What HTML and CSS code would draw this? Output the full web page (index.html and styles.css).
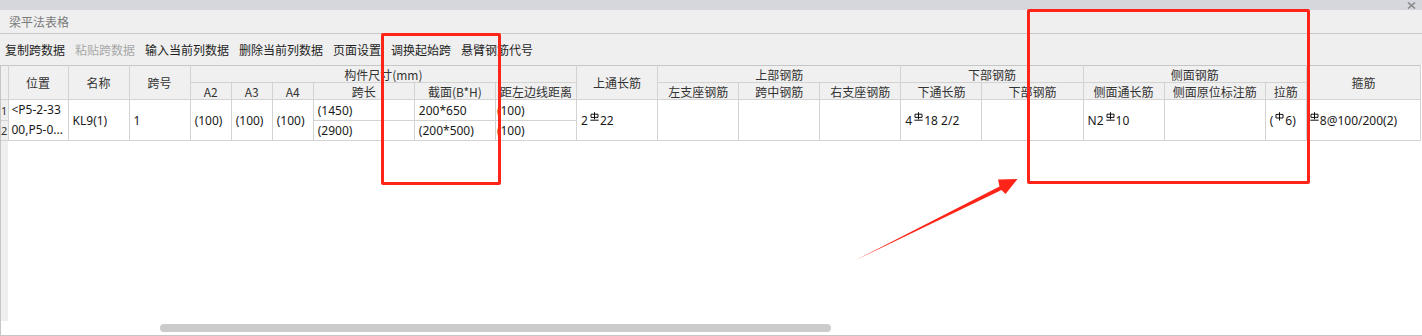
FILE: index.html
```html
<!DOCTYPE html>
<html lang="zh">
<head>
<meta charset="utf-8">
<title>梁平法表格</title>
<link rel="stylesheet" href="styles.css">
</head>
<body>
<svg width="0" height="0" class="defs">
  <defs>
    <symbol id="hrb" viewBox="0 0 9 9">
      <path d="M4.5 0.2V7.4M1 2.2H8V5.4H1Z M0.3 8.2H8.7" fill="none" stroke="currentColor" stroke-width="1"/>
    </symbol>
    <symbol id="hpb" viewBox="0 0 9 9">
      <path d="M4.5 0.2V8.6M1 2.4H8V6H1Z" fill="none" stroke="currentColor" stroke-width="1"/>
    </symbol>
  </defs>
</svg>
<div class="app">
  <div class="topbar">
    <svg class="close" width="9" height="7" viewBox="0 0 9 7"><path d="M1 0.5L8 6.5M8 0.5L1 6.5" stroke="#8a8a8a" stroke-width="1.6"/></svg>
  </div>
  <div class="titlebar">梁平法表格</div>
  <div class="toolbar">
    <span class="tool">复制跨数据</span>
    <span class="tool disabled">粘贴跨数据</span>
    <span class="tool">输入当前列数据</span>
    <span class="tool">删除当前列数据</span>
    <span class="tool">页面设置</span>
    <span class="tool">调换起始跨</span>
    <span class="tool">悬臂钢筋代号</span>
  </div>
  <div class="grid">
    <table class="sheet">
      <colgroup>
        <col class="c-rh"><col class="c60"><col class="c61"><col class="c61">
        <col class="c41"><col class="c41"><col class="c41"><col class="c101"><col class="c81"><col class="c81">
        <col class="c81"><col class="c81"><col class="c81"><col class="c81">
        <col class="c81"><col class="c101"><col class="c81"><col class="c101"><col class="c41"><col class="c115">
      </colgroup>
      <thead>
        <tr class="h1">
          <th class="rh" rowspan="2"></th>
          <th rowspan="2">位置</th>
          <th rowspan="2">名称</th>
          <th rowspan="2">跨号</th>
          <th colspan="6">构件尺寸(mm)</th>
          <th rowspan="2">上通长筋</th>
          <th colspan="3">上部钢筋</th>
          <th colspan="2">下部钢筋</th>
          <th colspan="3">侧面钢筋</th>
          <th rowspan="2">箍筋</th>
        </tr>
        <tr class="h2">
          <th>A2</th><th>A3</th><th>A4</th><th>跨长</th><th>截面(B*H)</th><th class="tight">距左边线距离</th>
          <th>左支座钢筋</th><th>跨中钢筋</th><th>右支座钢筋</th>
          <th>下通长筋</th><th>下部钢筋</th>
          <th>侧面通长筋</th><th>侧面原位标注筋</th><th>拉筋</th>
        </tr>
      </thead>
      <tbody>
        <tr class="r1">
          <td class="rh">1</td>
          <td rowspan="2" class="pos">&lt;P5-2-33<br>00,P5-0...</td>
          <td rowspan="2">KL9(1)</td>
          <td rowspan="2">1</td>
          <td rowspan="2">(100)</td>
          <td rowspan="2">(100)</td>
          <td rowspan="2">(100)</td>
          <td>(1450)</td>
          <td>200*650</td>
          <td class="tight">(100)</td>
          <td rowspan="2">2<svg class="bar"><use href="#hrb"/></svg>22</td>
          <td rowspan="2"></td>
          <td rowspan="2"></td>
          <td rowspan="2"></td>
          <td rowspan="2">4<svg class="bar"><use href="#hrb"/></svg>18 2/2</td>
          <td rowspan="2"></td>
          <td rowspan="2">N2<svg class="bar"><use href="#hrb"/></svg>10</td>
          <td rowspan="2"></td>
          <td rowspan="2">(<svg class="bar"><use href="#hpb"/></svg>6)</td>
          <td rowspan="2" class="tight"><svg class="bar"><use href="#hrb"/></svg>8@100/200(2)</td>
        </tr>
        <tr class="r2">
          <td class="rh">2</td>
          <td>(2900)</td>
          <td>(200*500)</td>
          <td class="tight">(100)</td>
        </tr>
      </tbody>
    </table>
    <div class="blank">
      <div class="strip"></div>
    </div>
    <div class="hscroll"><div class="thumb"></div></div>
  </div>

  <div class="mark mark-a"></div>
  <div class="mark mark-b"></div>
  <svg class="arrow" width="1422" height="336" viewBox="0 0 1422 336">
    <polygon points="855,260.5 999.5,186.5 998,179.5 1017.5,179 1005.5,194 1001.5,190" fill="#ff2418"/>
  </svg>
</div>
</body>
</html>
```

FILE: styles.css
```css
html, body {
  margin: 0;
  padding: 0;
  background: #ffffff;
}
body {
  font-family: "Noto Sans", "Noto Sans CJK SC", sans-serif;
  font-size: 12px;
  color: #222;
}
.defs {
  position: absolute;
  width: 0;
  height: 0;
}
.app {
  position: relative;
  width: 1422px;
  height: 336px;
  overflow: hidden;
}
.topbar {
  height: 10px;
  background: #d6d7dc;
  display: flex;
  justify-content: flex-end;
  align-items: center;
  padding-right: 6px;
}
.close {
  display: block;
}
.titlebar {
  height: 23px;
  line-height: 23px;
  background: #efefef;
  border-bottom: 1px solid #c9c9c9;
  padding-left: 9px;
  color: #7a7a7a;
  font-family: "Noto Sans CJK SC", sans-serif;
  font-size: 12px;
}
.toolbar {
  height: 31px;
  background: #efefef;
  display: flex;
  align-items: center;
  gap: 10px;
  padding-left: 5px;
  font-family: "Noto Sans CJK SC", sans-serif;
  color: #1e1e1e;
}
.tool.disabled {
  color: #a8a8a8;
}
.grid {
  border-left: 1px solid #c6c6c6;
  border-bottom: 1px solid #c6c6c6;
  height: 270px;
  display: flex;
  flex-direction: column;
  background: #fff;
}
.sheet {
  border-collapse: collapse;
  table-layout: fixed;
  width: 1420px;
  font-family: "Noto Sans", "Noto Sans CJK SC", sans-serif;
  font-size: 12px;
}
.c-rh { width: 7px; }
.c41 { width: 41px; }
.c60 { width: 60px; }
.c61 { width: 61px; }
.c81 { width: 81px; }
.c101 { width: 101px; }
.c115 { width: 114px; }
.sheet th, .sheet td {
  border: 1px solid #d3d3d3;
  padding: 0 4px;
  white-space: nowrap;
  overflow: hidden;
}
.sheet th {
  background: #f0f0f0;
  font-weight: normal;
  color: #333;
  font-family: "Noto Sans CJK SC", sans-serif;
  text-align: center;
  line-height: 15px;
  padding: 0;
}
.sheet .h1 th { height: 16px; }
.sheet .h2 th { height: 16px; }
.sheet tr:first-child th { border-top: 1px solid #c6c6c6; }
.sheet td {
  text-align: left;
  color: #1a1a1a;
}
.sheet .r1 td { height: 20px; }
.sheet .r2 td { height: 19px; }
.sheet .rh {
  background: #efefef;
  padding: 0;
  font-size: 11px;
  text-align: left;
  color: #333;
  border-left: none;
}
.sheet th.rh { border-left: none; }
.sheet td.tight { padding-left: 1px; }
.sheet th.tight { padding: 0; }
.sheet td.pos {
  line-height: 20px;
  padding-left: 3px;
}
.bar {
  width: 9px;
  height: 9px;
  vertical-align: 4px;
  margin: 0 1px 0 2px;
  color: #111;
}
.blank {
  flex: 1;
  display: flex;
}
.strip {
  width: 7px;
  background: #efefef;
}
.hscroll {
  height: 14px;
  display: flex;
  align-items: center;
}
.thumb {
  margin-left: 159px;
  width: 671px;
  height: 8px;
  border-radius: 4px;
  background: #cbcbcb;
}
.mark {
  position: absolute;
  border: 3px solid #ff2418;
  border-radius: 2px;
}
.mark-a {
  left: 381px;
  top: 33px;
  width: 114px;
  height: 146px;
}
.mark-b {
  left: 1027px;
  top: 9px;
  width: 277px;
  height: 169px;
}
.arrow {
  position: absolute;
  left: 0;
  top: 0;
  pointer-events: none;
}
```
